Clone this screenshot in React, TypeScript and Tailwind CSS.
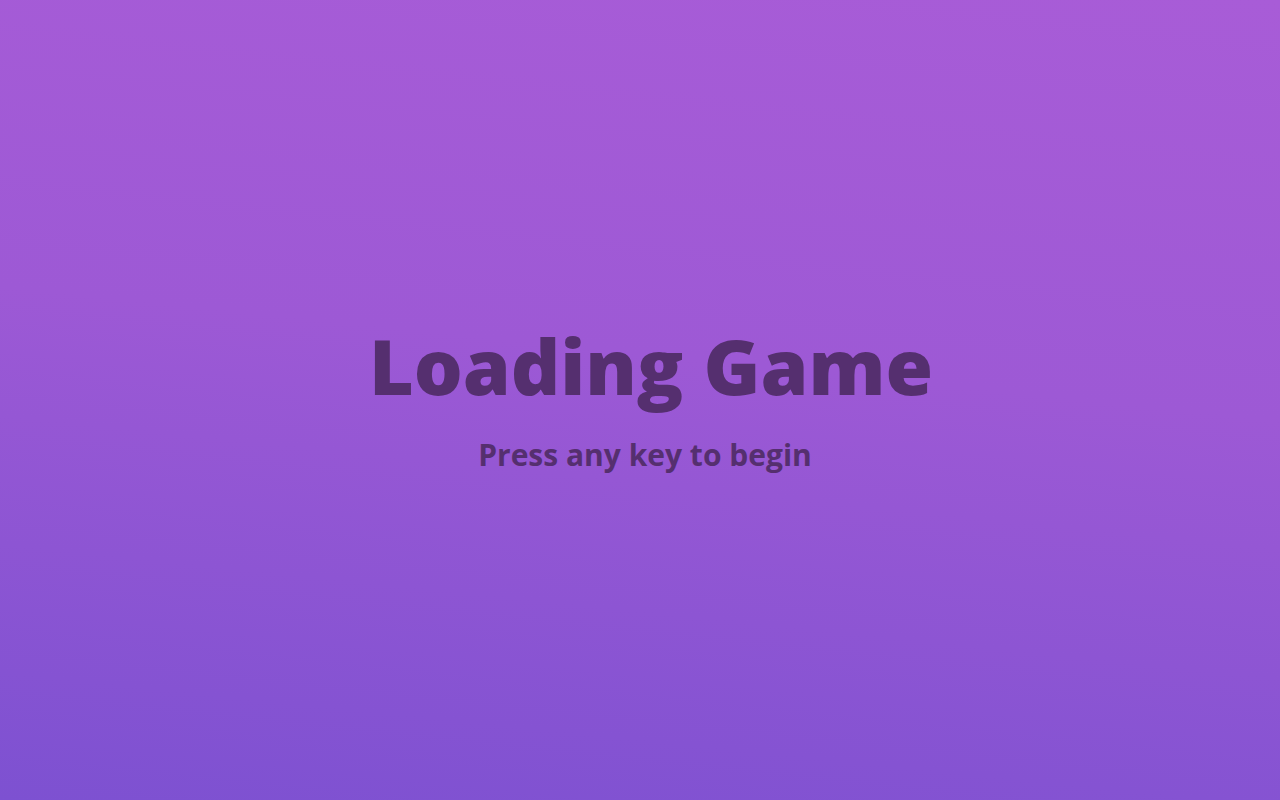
export default function App() {
    return (
        <div className="flex h-[800px] w-full flex-col items-center justify-center bg-[linear-gradient(186deg,#a85cd7_0%,#9d59d5_45%,#7d51d1_100%)] pb-[4px] font-['Open_Sans',sans-serif]">
            <h1 className="pl-[22px] text-[77px] font-extrabold leading-none text-[#552f6f]">Loading Game</h1>
            <p className="mt-[36px] pl-[10px] text-[30px] font-bold leading-none text-[#552f6f]">Press any key to begin</p>
        </div>
    );
}
